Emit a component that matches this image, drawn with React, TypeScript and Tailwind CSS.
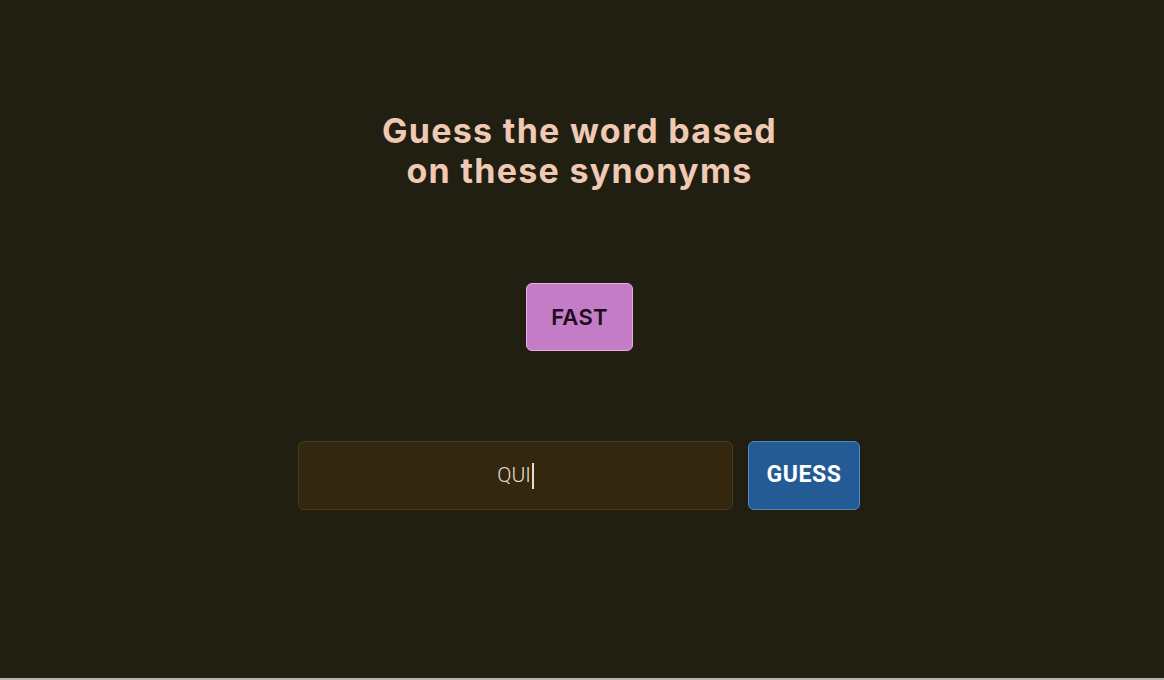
import { FC } from 'react';

const SynonymTag: FC<{ word: string }> = ({ word }) => (
  <div className="w-[107px] h-[68px] flex items-center justify-center rounded-md bg-[#c47cc6] border border-[#e6b0e6] text-[#1c0c1c] text-[22px] font-semibold tracking-[0.3px] font-['Inter',sans-serif]">
    {word}
  </div>
);

export default function App() {
  return (
    <div className="h-[680px] w-full bg-[#201f11] border-b-2 border-[#b5b5b0] flex flex-col items-center pr-[5px] font-['Inter',sans-serif]">
      <h1 className="mt-[111px] text-center text-[34px] leading-[40px] font-bold text-[#efc9b3] tracking-[1.3px]">
        Guess the word based
        <br />
        on these synonyms
      </h1>

      <div className="mt-[92px] flex gap-3">
        <SynonymTag word="FAST" />
      </div>

      <div className="mt-[90px] flex gap-[15px] -ml-[1px]">
        <div className="w-[435px] h-[69px] rounded-md bg-[#33270f] border border-[#4a3a1b] flex items-center justify-center text-[21px] font-light text-[#eadbd2] font-['Roboto',sans-serif]">
          <span>QUI</span>
          <span className="inline-block w-[2px] h-[26px] bg-[#eadbd2] ml-[1px]" />
        </div>
        <button className="w-[112px] h-[69px] rounded-md bg-[#255b95] border border-[#4f88c6] text-white text-[23px] font-bold tracking-[0.6px] font-['Roboto',sans-serif]">
          GUESS
        </button>
      </div>
    </div>
  );
}
